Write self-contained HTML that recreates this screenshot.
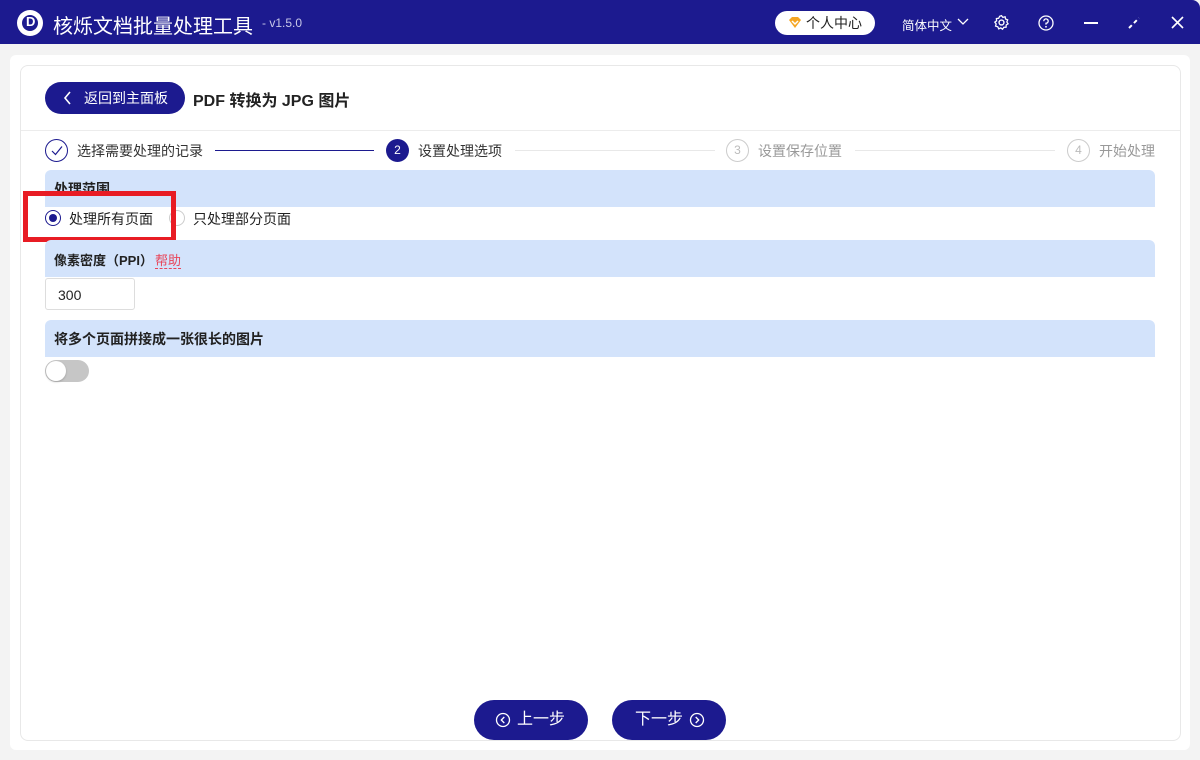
<!DOCTYPE html>
<html><head><meta charset="utf-8"><style>
*{margin:0;padding:0;box-sizing:border-box}
body{width:1200px;height:760px;background:#f3f3f3;font-family:"Liberation Sans","Noto Sans CJK SC",sans-serif;position:relative;overflow:hidden;color:#333}
.tb{position:absolute;left:0;top:0;width:1200px;height:44px;background:#1c1a8f;border-radius:0 8px 0 0}
.abs{position:absolute}
.card{position:absolute;left:10px;top:55px;width:1180px;height:695px;background:#fff;border-radius:6px}
.inner{position:absolute;left:20px;top:65px;width:1161px;height:676px;border:1px solid #e8e8e8;border-radius:8px;background:#fff}
.sec{position:absolute;left:45px;width:1110px;height:37px;background:#d3e3fb;border-radius:6px 6px 0 0;font-size:14px;font-weight:bold;color:#222;padding:9px 0 0 9px}
.step{position:absolute;top:139px;width:23px;height:23px;border-radius:50%;font-size:12px;text-align:center;line-height:21px}
.st{position:absolute;top:141px;font-size:14px}
.btn{position:absolute;top:700px;width:114px;height:40px;background:#1c1a8f;border-radius:20px;color:#fff;font-size:16px;text-align:center;line-height:40px}
</style></head><body>
<div class="tb"></div>
<div class="abs" style="left:17px;top:10px;width:26px;height:26px;border-radius:50%;background:#fff"></div>
<div class="abs" style="left:22px;top:15px;width:16px;height:16px;border-radius:50%;background:#1c1a8f"></div>
<div class="abs" style="left:26px;top:14px;color:#fff;font-weight:bold;font-size:13px">D</div>
<div class="abs" style="left:53px;top:10px;color:#fff;font-size:20px">核烁文档批量处理工具</div>
<div class="abs" style="left:262px;top:16px;color:#c8c8e8;font-size:12px">- v1.5.0</div>
<div class="abs" style="left:775px;top:11px;width:100px;height:24px;background:#fff;border-radius:12px;font-size:14px;line-height:24px;padding-left:31px;color:#222">个人中心</div>
<svg class="abs" style="left:788px;top:16px" width="14" height="13" viewBox="0 0 14 13"><path d="M1 4L4 1H10L13 4L7 12Z" fill="#f5a623"/><path d="M4 5L7 8L10 5" stroke="#fff" stroke-width="1.5" fill="none"/></svg>
<div class="abs" style="left:902px;top:15px;color:#fff;font-size:12.5px">简体中文</div>
<svg class="abs" style="left:957px;top:18px" width="12" height="8"><path d="M1 1L6 6L11 1" stroke="#fff" fill="none" stroke-width="1.3"/></svg>
<svg class="abs" style="left:993px;top:14px" width="17" height="17" viewBox="0 0 16 16"><circle cx="8" cy="8" r="2.3" stroke="#fff" fill="none" stroke-width="1.3"/><path d="M8 1.5L9.3 3.2L11.4 2.6L11.8 4.7L13.8 5.5L13 7.5L14.2 9.2L12.4 10.3L12.3 12.5L10.2 12.5L9 14.3L7.3 13.1L5.4 14L4.5 12L2.4 11.4L3 9.4L1.7 7.7L3.4 6.4L3.2 4.3L5.3 4L6.3 2.1Z" stroke="#fff" fill="none" stroke-width="1.2"/></svg>
<svg class="abs" style="left:1038px;top:15px" width="16" height="16"><circle cx="8" cy="8" r="7" stroke="#fff" fill="none" stroke-width="1.3"/><path d="M5.8 6.2A2.2 2.2 0 1 1 8 8.3V9.6" stroke="#fff" fill="none" stroke-width="1.3"/><circle cx="8" cy="11.8" r=".9" fill="#fff"/></svg>
<div class="abs" style="left:1084px;top:22px;width:14px;height:2px;background:#fff"></div>
<svg class="abs" style="left:1127px;top:16px" width="14" height="14"><path d="M2 12L12 2" stroke="#fff" stroke-width="2" stroke-dasharray="4 3"/></svg>
<svg class="abs" style="left:1171px;top:16px" width="13" height="13"><path d="M1 1L12 12M12 1L1 12" stroke="#fff" stroke-width="1.6"/></svg>

<div class="card"></div>
<div class="inner"></div>
<div class="abs" style="left:45px;top:82px;width:140px;height:32px;background:#1c1a8f;border-radius:16px;color:#fff;font-size:14px;line-height:32px;padding-left:39px">返回到主面板</div>
<svg class="abs" style="left:63px;top:91px" width="9" height="14"><path d="M7 1L2 7L7 13" stroke="#fff" fill="none" stroke-width="1.6"/></svg>
<div class="abs" style="left:193px;top:87px;font-size:16px;font-weight:bold;color:#222">PDF 转换为 JPG 图片</div>
<div class="abs" style="left:21px;top:130px;width:1159px;height:1px;background:#ececec"></div>

<div class="step" style="left:45px;border:1px solid #1c1a8f"></div>
<svg class="abs" style="left:51px;top:145px" width="12" height="11"><path d="M1 6L4.5 9.5L11 1.5" stroke="#1c1a8f" fill="none" stroke-width="1.2"/></svg>
<div class="st" style="left:77px;color:#333">选择需要处理的记录</div>
<div class="abs" style="left:215px;top:150px;width:159px;height:1px;background:#1c1a8f"></div>
<div class="step" style="left:386px;background:#1c1a8f;color:#fff;line-height:23px">2</div>
<div class="st" style="left:418px;color:#333">设置处理选项</div>
<div class="abs" style="left:515px;top:150px;width:200px;height:1px;background:#e8e8e8"></div>
<div class="step" style="left:726px;border:1px solid #ccc;color:#bbb">3</div>
<div class="st" style="left:758px;color:#999">设置保存位置</div>
<div class="abs" style="left:855px;top:150px;width:200px;height:1px;background:#e8e8e8"></div>
<div class="step" style="left:1067px;border:1px solid #ccc;color:#bbb">4</div>
<div class="st" style="left:1099px;color:#999">开始处理</div>

<div class="sec" style="top:170px">处理范围</div>
<div class="abs" style="left:45px;top:210px;width:16px;height:16px;border:1px solid #1c1a8f;border-radius:50%"></div>
<div class="abs" style="left:49px;top:214px;width:8px;height:8px;background:#1c1a8f;border-radius:50%"></div>
<div class="abs" style="left:69px;top:209px;font-size:14px;color:#222">处理所有页面</div>
<div class="abs" style="left:169px;top:210px;width:16px;height:16px;border:1px solid #ccc;border-radius:50%"></div>
<div class="abs" style="left:193px;top:209px;font-size:14px;color:#222">只处理部分页面</div>
<div class="abs" style="left:23px;top:191px;width:153px;height:51px;border:5px solid #e81c24"></div>

<div class="sec" style="top:240px;font-size:13px;padding-top:10px">像素密度（PPI）<span style="color:#e8455a;font-weight:normal;margin-left:2px;border-bottom:1px dashed #e8455a">帮助</span></div>
<div class="abs" style="left:45px;top:278px;width:90px;height:32px;border:1px solid #ddd;border-radius:3px;font-size:14px;padding:8px 0 0 12px;color:#222">300</div>

<div class="sec" style="top:320px">将多个页面拼接成一张很长的图片</div>
<div class="abs" style="left:45px;top:360px;width:44px;height:22px;background:#c6c6c6;border-radius:11px"></div>
<div class="abs" style="left:46px;top:361px;width:20px;height:20px;background:#fff;border-radius:50%;box-shadow:0 1px 2px rgba(0,0,0,.2)"></div>

<div class="btn" style="left:474px;padding-left:20px">上一步</div>
<svg class="abs" style="left:495px;top:712px" width="16" height="16"><circle cx="8" cy="8" r="6.5" stroke="#fff" fill="none" stroke-width="1.3"/><path d="M9.3 5L6.3 8L9.3 11" stroke="#fff" fill="none" stroke-width="1.3"/></svg>
<div class="btn" style="left:612px;padding-right:20px">下一步</div>
<svg class="abs" style="left:689px;top:712px" width="16" height="16"><circle cx="8" cy="8" r="6.5" stroke="#fff" fill="none" stroke-width="1.3"/><path d="M6.7 5L9.7 8L6.7 11" stroke="#fff" fill="none" stroke-width="1.3"/></svg>
</body></html>
